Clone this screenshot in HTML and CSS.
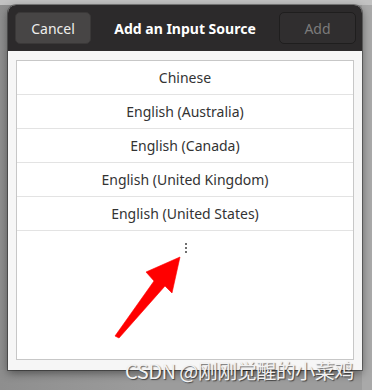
FILE: index.html
```html
<!DOCTYPE html>
<html lang="en">
<head>
    <meta charset="UTF-8">
    <meta name="viewport" content="width=device-width, initial-scale=1.0">
    <title>Add an Input Source</title>
    <link rel="stylesheet" href="styles.css">
</head>
<body>
    <div class="screen">
        <div class="dialog">
            <header class="dialog-header">
                <button class="btn btn-cancel">Cancel</button>
                <h1 class="dialog-title">Add an Input Source</h1>
                <button class="btn btn-add" disabled>Add</button>
            </header>
            <div class="dialog-body">
                <ul class="source-list">
                    <li class="source-row">Chinese</li>
                    <li class="source-row">English (Australia)</li>
                    <li class="source-row">English (Canada)</li>
                    <li class="source-row">English (United Kingdom)</li>
                    <li class="source-row">English (United States)</li>
                    <li class="source-row more-row">
                        <span class="more-dots"><i></i><i></i><i></i></span>
                    </li>
                </ul>
            </div>
        </div>

        <!-- annotation on top of the screenshot -->
        <svg class="arrow" width="372" height="390" viewBox="0 0 372 390">
            <polygon points="115,336 154,281 146,272 180,257 172,293 165,286 119,338" fill="#ff0000" stroke="#ff0000" stroke-width="0.6" stroke-linejoin="round"/>
        </svg>
        <div class="watermark">CSDN @刚刚觉醒的小菜鸡</div>
    </div>
</body>
</html>
```

FILE: styles.css
```css
body {
    margin: 0;
    font-family: 'Noto Sans', 'Noto Sans CJK SC', sans-serif;
    background: #9c9c9c;
}

.screen {
    position: relative;
    width: 372px;
    height: 390px;
    box-sizing: border-box;
    padding: 5px 10px 0 8px;
    overflow: hidden;
    background:
        linear-gradient(to bottom, #c2c2c2 0, #c2c2c2 5px, transparent 5px),
        linear-gradient(to right, transparent 362px, #a9a9a9 362px),
        linear-gradient(to right, #8e8e8e, #9c9c9c 40%);
}

.dialog {
    width: 354px;
    border-radius: 8px 8px 0 0;
    background: #f6f6f6;
    box-shadow: 0 3px 10px rgba(0, 0, 0, 0.45), 0 0 0 1px rgba(0, 0, 0, 0.35);
}

.dialog-header {
    display: flex;
    align-items: center;
    justify-content: space-between;
    height: 46px;
    box-sizing: border-box;
    padding: 0 6px 0 7px;
    background: #2c2a2b;
    border-radius: 8px 8px 0 0;
}

.dialog-title {
    margin: 0;
    color: #ffffff;
    font-size: 14px;
    font-weight: 700;
}

.btn {
    height: 32px;
    border-radius: 5px;
    font-family: inherit;
    font-size: 14px;
    padding: 0;
}

.btn-cancel {
    width: 76px;
    background: #474545;
    color: #eeeeec;
    border: 1px solid #3a3838;
}

.btn-add {
    width: 77px;
    background: #302e2f;
    color: #7c7b7b;
    border: 1px solid #1f1e1e;
}

.dialog-body {
    padding: 9px 8px 10px 8px;
}

.source-list {
    list-style: none;
    margin: 0;
    padding: 0;
    height: 300px;
    box-sizing: border-box;
    background: #ffffff;
    border: 1px solid #c7c7c7;
}

.source-row {
    height: 33px;
    display: flex;
    align-items: center;
    justify-content: center;
    border-bottom: 1px solid #e3e3e3;
    color: #333333;
    font-size: 14px;
}

.more-row {
    border-bottom: none;
}

.more-dots {
    display: flex;
    flex-direction: column;
    gap: 2px;
    padding-left: 1px;
}

.more-dots i {
    display: block;
    width: 2px;
    height: 2px;
    background: #6f6f6f;
}

.arrow {
    position: absolute;
    left: 0;
    top: 0;
    pointer-events: none;
}

.watermark {
    position: absolute;
    left: 125px;
    top: 361px;
    font-family: 'Noto Sans CJK SC', sans-serif;
    color: #f2f2f2;
    font-size: 20px;
    line-height: 20px;
    font-weight: 400;
    letter-spacing: -0.5px;
    white-space: nowrap;
    text-shadow: 1px 1px 1px rgba(0, 0, 0, 0.55);
}
```
